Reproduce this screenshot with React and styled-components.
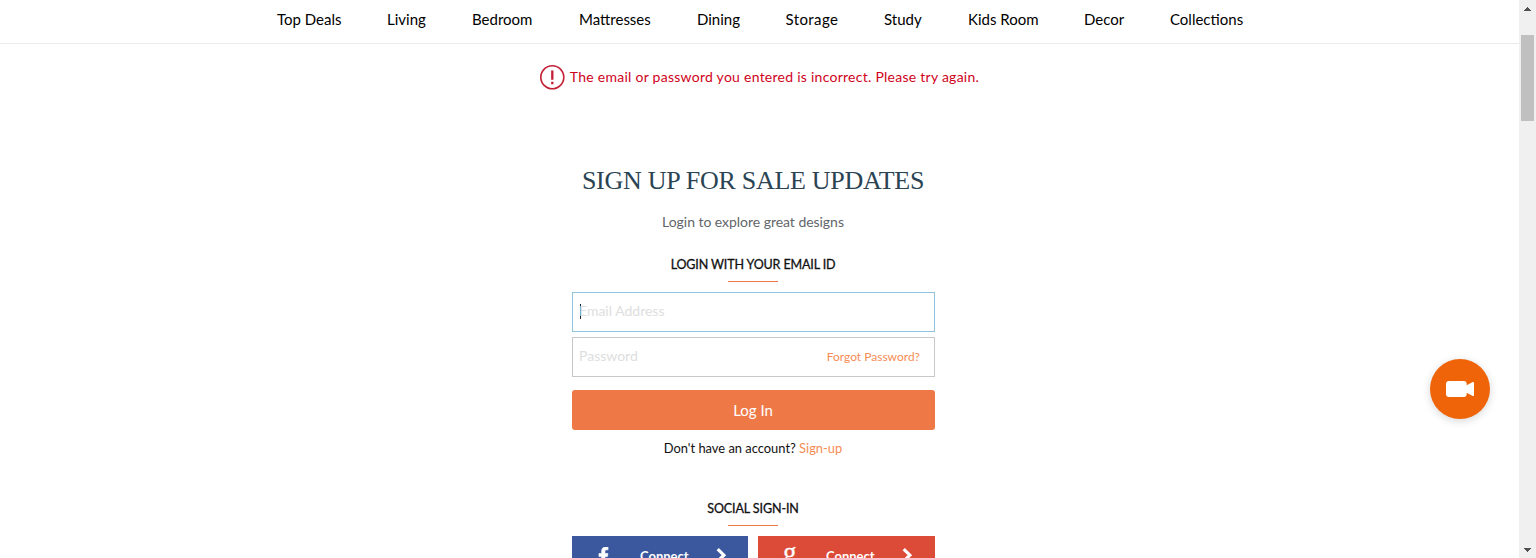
import React from "react";
import styled, { createGlobalStyle } from "styled-components";
import { FaFacebookF } from "react-icons/fa";

const Global = createGlobalStyle`
  * { box-sizing: border-box; }
  html, body { margin: 0; padding: 0; height: 100%; overflow: hidden; background: #fff; }
  body { font-family: Lato, "Open Sans", sans-serif; color: #111; }
`;

const Window = styled.div`
  display: flex;
  width: 1536px;
  height: 558px;
  overflow: hidden;
`;
const Page = styled.div`
  flex: 1;
  min-width: 0;
  height: 558px;
  overflow: hidden;
  display: flex;
  flex-direction: column;
`;

const Label = styled.span`
  display: inline-block;
  white-space: nowrap;
  letter-spacing: ${(p) => p.$track || 0}px;
  margin-top: ${(p) => p.$lift || 0}px;
`;

const Nav = styled.nav`
  flex: none;
  display: flex;
  justify-content: center;
  gap: 46px;
  height: 44px;
  padding: 9px 0 0 1px;
  border-bottom: 1px solid #ebebeb;
`;
const NavLink = styled.a`
  width: ${(p) => p.$width}px;
  font-size: 15px;
  line-height: 20px;
  color: #000;
  white-space: nowrap;
  letter-spacing: ${(p) => p.$track || 0}px;
`;

const ErrorRow = styled.div`
  flex: none;
  display: flex;
  align-items: center;
  justify-content: center;
  gap: 5px;
  height: 26px;
  margin-top: 20px;
  color: #d0021b;
  font-size: 14px;
  svg { flex: none; }
`;

const Column = styled.main`
  flex: none;
  width: 363px;
  margin: 74px 0 0 572px;
  display: flex;
  flex-direction: column;
  align-items: center;
`;
const Title = styled.h1`
  margin: 0 1px 0 0;
  height: 34px;
  font: 400 26px/34px "Liberation Serif", serif;
  color: #2b4453;
  white-space: nowrap;
`;
const Intro = styled.p`
  margin: 14px 1px 0 0;
  font-size: 14px;
  line-height: 20px;
  color: #626669;
`;
const SectionTitle = styled.h2`
  margin: ${(p) => p.$top}px 1px 0 0;
  height: 27px;
  width: 50px;
  display: flex;
  justify-content: center;
  border-bottom: 1px solid #ee7844;
  font-size: 12.5px;
  font-weight: 400;
  line-height: 20px;
  color: #111;
  -webkit-text-stroke: 0.3px #111;
`;
const Field = styled.div`
  width: 100%;
  height: 40px;
  margin-top: ${(p) => p.$top}px;
  padding: 0 14px 2px 6px;
  display: flex;
  align-items: center;
  justify-content: space-between;
  border: 1px solid ${(p) => (p.$focused ? "#90c4de" : "#c8c8c8")};
  font-size: 14px;
  color: #dedede;
`;
const Entry = styled.div`
  display: flex;
  align-items: center;
`;
const Caret = styled.i`
  width: 1px;
  height: 15px;
  margin: 0 -2px 0 1px;
  background: #222;
`;
const OrangeLink = styled.a`
  color: #f68c55;
  font-size: ${(p) => p.$size}px;
`;
const LoginButton = styled.button`
  width: 100%;
  height: 40px;
  margin-top: 13px;
  padding: 0 1px 0 0;
  border: 0;
  border-radius: 3px;
  background: #ee7946;
  color: #fff;
  font: 400 15px Lato, sans-serif;
`;
const SignUp = styled.p`
  margin: 8px 1px 0 0;
  font-size: 12.9px;
  line-height: 20px;
  white-space: nowrap;
`;
const SocialRow = styled.div`
  display: grid;
  grid-template-columns: 176px 177px;
  gap: 10px;
  width: 100%;
  margin-top: 10px;
`;
const SocialButton = styled.button`
  height: 40px;
  padding: 0 0 0 26px;
  border: 0;
  display: grid;
  grid-template-columns: 42px 76px 12px;
  align-items: center;
  justify-items: start;
  background: ${(p) => p.$color};
  color: #fff;
  font: 700 13px Lato, sans-serif;
`;
const FacebookMark = styled(FaFacebookF)`
  width: 11px;
  height: 17px;
  margin-bottom: 2px;
  path {
    stroke: #fff;
    stroke-width: 18px;
  }
`;
const GoogleMark = styled.span`
  font: 400 27px/30px "Liberation Serif", serif;
  -webkit-text-stroke: 0.3px #fff;
  margin: 0 0 9px -1px;
`;

const Scrollbar = styled.aside`
  flex: none;
  width: 17px;
  height: 558px;
  background: #f0f0f0;
  display: flex;
  flex-direction: column;
  align-items: center;
  padding: 7px 0 6px;
`;
const Thumb = styled.div`
  width: 13px;
  height: 86px;
  margin: 24px 2px auto;
  background: #c0c0c0;
`;
const ChatButton = styled.button`
  position: fixed;
  left: 1430px;
  top: 359px;
  width: 60px;
  height: 60px;
  padding: 0;
  border: 0;
  border-radius: 50%;
  background: #ef6409;
  box-shadow: 0 2px 8px rgba(0, 0, 0, 0.16);
  display: flex;
  align-items: center;
  justify-content: center;
`;

const links = [
  ["Top Deals", 64], ["Living", 39], ["Bedroom", 61], ["Mattresses", 72], ["Dining", 42.5],
  ["Storage", 52.5, 0.4], ["Study", 38], ["Kids Room", 70], ["Decor", 40], ["Collections", 73],
];

const Chevron = () => (
  <svg width="11" height="18" viewBox="0 0 11 18" fill="none" stroke="#fff" strokeWidth="3.2">
    <path d="M1.7 2.2l6.2 6-6.2 6" />
  </svg>
);

export default function App() {
  return (
    <>
      <Global />
      <Window>
        <Page>
          <Nav>
            {links.map(([text, width, track]) => (
              <NavLink key={text} $width={width} $track={track}>{text}</NavLink>
            ))}
          </Nav>
          <ErrorRow>
            <svg width="25" height="25" viewBox="0 0 25 25" fill="none" stroke="#c41f35">
              <circle cx="12.3" cy="12.3" r="11.5" strokeWidth="1.6" />
              <path d="M12.3 5.5v9.2M12.3 16.8v2.4" strokeWidth="2.3" />
            </svg>
            <Label $track={0.26} $lift={-2}>The email or password you entered is incorrect. Please try again.</Label>
          </ErrorRow>
          <Column>
            <Title><Label $track={-0.27}>SIGN UP FOR SALE UPDATES</Label></Title>
            <Intro><Label $track={-0.04}>Login to explore great designs</Label></Intro>
            <SectionTitle $top={23}><Label $track={-0.13}>LOGIN WITH YOUR EMAIL ID</Label></SectionTitle>
            <Field $top={10} $focused>
              <Entry><Caret /><Label $lift={-2}>Email Address</Label></Entry>
            </Field>
            <Field $top={5}>
              <Label $lift={-2}>Password</Label>
              <OrangeLink $size={12}>Forgot Password?</OrangeLink>
            </Field>
            <LoginButton>Log In</LoginButton>
            <SignUp>Don't have an account? <OrangeLink $size={12.9}>Sign-up</OrangeLink></SignUp>
            <SectionTitle $top={41}><Label $track={-0.1}>SOCIAL SIGN-IN</Label></SectionTitle>
            <SocialRow>
              <SocialButton $color="#3b589e">
                <FacebookMark />
                <span>Connect</span>
                <Chevron />
              </SocialButton>
              <SocialButton $color="#dc4a38">
                <GoogleMark>g</GoogleMark>
                <span>Connect</span>
                <Chevron />
              </SocialButton>
            </SocialRow>
          </Column>
        </Page>
        <Scrollbar>
          <svg width="7" height="4" viewBox="0 0 7 4"><path d="M3 0h1v1h1v1h1v1h1v1H0V3h1V2h1V1h1z" fill="#505050" /></svg>
          <Thumb />
          <svg width="7" height="4" viewBox="0 0 7 4"><path d="M0 0h7v1H6v1H5v1H4v1H3V3H2V2H1V1H0z" fill="#505050" /></svg>
        </Scrollbar>
      </Window>
      <ChatButton>
        <svg width="28" height="16" viewBox="0 0 28 16" fill="#fff">
          <path d="M3 0h15q2.2 0 2.7 2.2V4.2L26.8 1q1.2-.4 1.2.8v12.4q0 1.2-1.2.8l-6.1-3.2v2Q20.2 16 18 16H3q-3 0-3-3V3q0-3 3-3z" />
        </svg>
      </ChatButton>
    </>
  );
}
